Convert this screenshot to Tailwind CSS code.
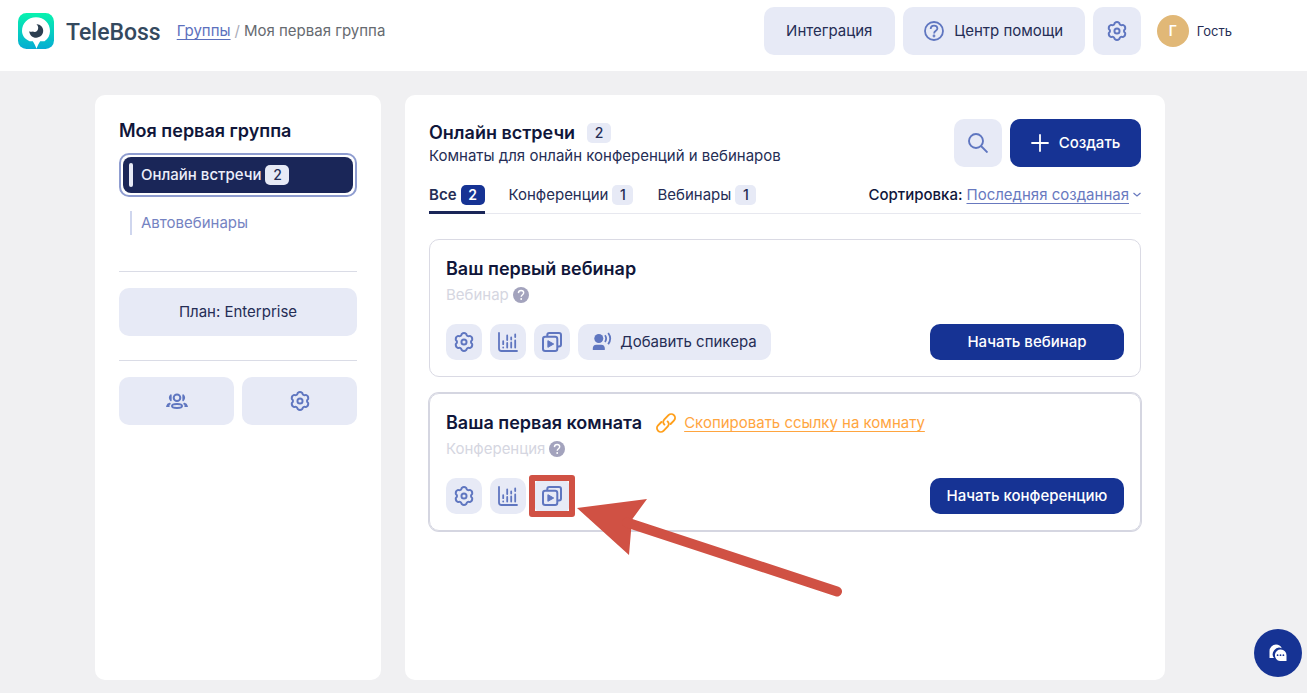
<!DOCTYPE html>
<html lang="ru">
<head>
<meta charset="utf-8">
<meta name="viewport" content="width=device-width, initial-scale=1">
<title>TeleBoss</title>
<script src="https://cdn.jsdelivr.net/npm/@tailwindcss/browser@4"></script>
</head>
<body class="flex min-h-screen flex-col bg-[#f0f0f2] font-['Inter','Liberation_Sans',sans-serif] text-[15px] leading-5 text-[#252d55]">

<svg class="hidden" aria-hidden="true">
  <symbol id="gear" viewBox="0 0 24 24" fill="none" stroke="currentColor" stroke-width="2.100" stroke-linejoin="round">
    <path d="M9.500 3.200Q12 1 14.500 3.200 15.200 6.500 18.400 5.400 21.500 6.500 20.900 9.800 18.300 12 20.900 14.200 21.500 17.500 18.400 18.600 15.200 17.500 14.500 20.800 12 23 9.500 20.800 8.800 17.500 5.600 18.600 2.500 17.500 3.100 14.200 5.700 12 3.100 9.800 2.500 6.500 5.600 5.400 8.800 6.500 9.500 3.200z"/>
    <circle cx="12" cy="12" r="2.800"/>
  </symbol>
  <symbol id="chart" viewBox="0 0 20 20" fill="none" stroke="currentColor" stroke-width="1.800" stroke-linecap="round">
    <path d="M1 .900v15.600q0 2.500 2.500 2.500H19"/>
    <path d="M5.200 9.200v3M5.200 15.300v.2M9.200 3.500v4.500M9.200 11v4.500M13.200 5.500v2M13.200 10.500v5M17.200 2.500v2.500M17.200 8.500v7"/>
  </symbol>
  <symbol id="records" viewBox="0 0 20 20" fill="none" stroke="currentColor" stroke-width="2" stroke-linejoin="round">
    <path d="M5.300 4.400V3q0-2 2-2H17q2 0 2 2v9.600q0 2-2 2h-1.200"/>
    <rect x="1" y="4.700" width="14.300" height="14.300" rx="2.200"/>
    <path d="M5.900 8.700v6.600l5.800-3.300z" fill="currentColor" stroke-width="1"/>
  </symbol>
  <symbol id="help-solid" viewBox="0 0 16 16">
    <circle cx="8" cy="8" r="8" fill="currentColor"/>
    <path d="M5.400 6.100c.1-1.700 1.200-2.600 2.700-2.600s2.600.9 2.600 2.300c0 1.900-2.500 1.900-2.500 4" fill="none" stroke="#fff" stroke-width="1.400"/>
    <circle cx="8.200" cy="12" r=".95" fill="#fff"/>
  </symbol>
</svg>

<header class="flex h-[71px] shrink-0 items-start bg-white pt-[7px] pr-[77px] pl-[18px]">
  <div class="flex h-12 items-center">
    <svg class="size-9" viewBox="0 0 36 36" aria-hidden="true">
      <defs><linearGradient id="lg" x1="0" y1="0" x2="0" y2="1"><stop stop-color="#08f3ae"/><stop offset="1" stop-color="#06acd3"/></linearGradient></defs>
      <rect width="36" height="36" rx="8.500" fill="url(#lg)"/>
      <path d="M18 4.300c8 0 14 6.100 14 13.700 0 4.300-2 8-5.500 10.300h-4.300c-1.500 2.200-2.700 4.600-3.700 7.500-1-2.900-2.200-5.300-3.700-7.500h-3.200C6.700 26 4 22.300 4 18 4 10.400 10 4.300 18 4.300z" fill="#fff"/>
      <path d="M18.500 11.200c3.900-.2 6.700 2.900 6.700 6.600 0 3.900-3.100 6.900-7 6.900-3.800 0-6.700-2.700-7-6.500 1.200.8 2.500.7 3.600.3 1.500.8 3.300.5 4.400-.8 1.500-1.700 1.400-4.900-.7-6.500z" fill="#2c3e50"/>
    </svg>
    <span class="ml-3 pt-1 font-['Roboto'] text-[23px] leading-8 font-medium text-[#34495e]">TeleBoss</span>
    <nav class="ml-4 flex items-center gap-1 text-[#666a70]" aria-label="Навигация">
      <a href="#" class="text-[#5c70bd] underline underline-offset-3">Группы</a><span class="text-[#a9abb8]">/</span><span>Моя первая группа</span>
    </nav>
  </div>
  <div class="ml-auto flex items-center gap-2">
    <button class="h-12 w-[131px] rounded-[10px] bg-[#e7eaf6]">Интеграция</button>
    <button class="flex h-12 w-[182px] items-center justify-center gap-2.5 rounded-[10px] bg-[#e7eaf6]">
      <svg class="size-5 text-[#5f76c0]" viewBox="0 0 20 20" fill="none" stroke="currentColor" stroke-width="1.800" aria-hidden="true"><circle cx="10" cy="10" r="9"/><path d="M6.700 8c0-2.100 1.400-3.400 3.400-3.400s3.300 1.200 3.300 2.900c0 2.400-3.300 2.300-3.300 5"/><circle cx="10" cy="15" r=".5"/></svg>
      Центр помощи
    </button>
    <button class="flex size-12 items-center justify-center rounded-[10px] bg-[#e7eaf6] text-[#5f76c0]" aria-label="Настройки"><svg class="size-[22px]"><use href="#gear"/></svg></button>
    <div class="ml-2 flex items-center gap-2 text-[13px]">
      <span class="flex size-8 items-center justify-center rounded-full bg-[#e1b877] text-[14px] font-semibold text-white">Г</span>
      <span class="-mr-0.5">Гость</span>
    </div>
  </div>
</header>

<div class="flex flex-1 gap-6 pt-6 pr-[142px] pb-[13px] pl-[95px]">
  <aside class="w-[286px] shrink-0 rounded-[10px] bg-white p-6">
    <h2 class="text-[18px] leading-6 font-semibold text-[#10163a]">Моя первая группа</h2>
    <nav class="mt-2.5" aria-label="Разделы">
      <a href="#" class="block rounded-[10px] border-2 border-[#8f9dd0] p-0.5">
        <span class="flex h-9 items-center rounded-lg bg-[#1a2658] px-1.5 font-medium text-[#eceefa]">
          <span class="mr-2 h-6 w-1 rounded-xs bg-[#e7eaf6]"></span>Онлайн встречи<span class="ml-1 flex h-5 w-6 items-center justify-center rounded-[5px] bg-[#e7eaf6] text-[14px] text-[#252d55]">2</span>
        </span>
      </a>
      <a href="#" class="mt-3.5 flex h-6 items-center pl-[11px] text-[#7583c2]"><span class="mr-[9px] h-6 w-0.5 bg-[#cfd6ee]"></span>Автовебинары</a>
    </nav>
    <hr class="mt-9 border-[#dadce6]">
    <button class="mt-4 h-12 w-full rounded-[10px] bg-[#e7eaf6]">План: Enterprise</button>
    <hr class="mt-6 border-[#dadce6]">
    <div class="mt-4 grid grid-cols-2 gap-2 text-[#5f76c0]">
      <button class="flex h-12 items-center justify-center rounded-[10px] bg-[#e7eaf6]" aria-label="Участники">
        <svg class="h-4 w-[22px]" viewBox="0 0 22 16" fill="none" stroke="currentColor" stroke-width="2" stroke-linecap="round"><circle cx="11" cy="4.800" r="3.300"/><ellipse cx="11" cy="13" rx="5" ry="1.900"/><path d="M4.900 2q-2.500 2.700 0 5.400zM17.100 2q2.500 2.700 0 5.400z" fill="currentColor" stroke-width="1.500" stroke-linejoin="round"/><path d="M3.700 10.700q-2 .5-2.400 2.200h1.500M18.300 10.700q2 .5 2.400 2.200h-1.500"/></svg>
      </button>
      <button class="flex h-12 items-center justify-center rounded-[10px] bg-[#e7eaf6]" aria-label="Настройки группы"><svg class="size-[22px]"><use href="#gear"/></svg></button>
    </div>
  </aside>

  <main class="min-w-0 flex-1 rounded-[10px] bg-white p-6">
    <div class="flex items-start">
      <div class="pt-px">
        <h1 class="flex items-center gap-3 text-[18px] leading-[26px] font-semibold text-[#10163a]">Онлайн встречи <span class="flex h-5 w-6 items-center justify-center rounded-[5px] bg-[#e7eaf6] text-[14px] font-medium text-[#252d55]">2</span></h1>
        <p>Комнаты для онлайн конференций и вебинаров</p>
      </div>
      <div class="ml-auto flex gap-2">
        <button class="flex size-12 items-center justify-center rounded-[10px] bg-[#e7eaf6] text-[#5f76c0]" aria-label="Поиск"><svg class="size-5" viewBox="0 0 20 20" fill="none" stroke="currentColor" stroke-width="1.900"><circle cx="8" cy="8" r="7"/><path d="M13 13l6.500 6.500"/></svg></button>
        <button class="flex h-12 w-[131px] items-center justify-center gap-2.5 rounded-[10px] bg-[#163394] font-medium text-white"><svg class="size-[18px]" viewBox="0 0 18 18" stroke="currentColor" stroke-width="1.800" stroke-linecap="round" aria-hidden="true"><path d="M9 1v16M1 9h16"/></svg>Создать</button>
      </div>
    </div>

    <div class="mt-4 flex items-start border-b border-[#e7e8ef]">
      <div class="-mb-px flex gap-6" role="tablist">
        <button role="tab" aria-selected="true" class="flex h-[31px] items-start border-b-3 border-[#1a2658] font-semibold"><span class="flex h-6 items-center gap-1">Все <span class="flex h-5 w-6 items-center justify-center rounded-[5px] bg-[#163394] text-[14px] text-white">2</span></span></button>
        <button role="tab" aria-selected="false" class="flex h-6 items-center gap-1">Конференции <span class="flex h-5 w-[21px] items-center justify-center rounded-[5px] bg-[#e7eaf6] text-[14px] font-medium">1</span></button>
        <button role="tab" aria-selected="false" class="flex h-6 items-center gap-1">Вебинары <span class="flex h-5 w-[21px] items-center justify-center rounded-[5px] bg-[#e7eaf6] text-[14px] font-medium">1</span></button>
      </div>
      <div class="ml-auto flex h-6 items-center gap-1 font-medium text-[#10163a]">
        <span>Сортировка:</span>
        <button class="flex items-center gap-1 font-normal text-[#6879bf]"><span class="underline underline-offset-3">Последняя созданная</span><svg class="h-1.5 w-2" viewBox="0 0 8 6" fill="none" stroke="currentColor" stroke-width="1.200" aria-hidden="true"><path d="M.5 1l3.500 3 3.500-3"/></svg></button>
      </div>
    </div>

    <section class="mt-[25px] rounded-[10px] border border-[#dadae4] p-4">
      <h3 class="text-[18px] leading-[26px] font-semibold text-[#10163a]">Ваш первый вебинар</h3>
      <div class="flex h-[26px] items-center gap-1 text-[#d5d6e1]">Вебинар <svg class="size-4 text-[#a3a3bd]"><use href="#help-solid"/></svg></div>
      <div class="mt-4 flex items-center gap-2 text-[#5f76c0]">
        <button class="flex size-9 items-center justify-center rounded-[10px] bg-[#e7eaf6]" aria-label="Настройки"><svg class="size-[22px]"><use href="#gear"/></svg></button>
        <button class="flex size-9 items-center justify-center rounded-[10px] bg-[#e7eaf6]" aria-label="Статистика"><svg class="size-5"><use href="#chart"/></svg></button>
        <button class="flex size-9 items-center justify-center rounded-[10px] bg-[#e7eaf6]" aria-label="Записи"><svg class="size-5"><use href="#records"/></svg></button>
        <button class="flex h-9 w-[193px] items-center justify-center gap-2 rounded-[10px] bg-[#e7eaf6]">
          <svg class="size-5" viewBox="0 0 20 20" aria-hidden="true"><circle cx="6.800" cy="6.500" r="4.500" fill="currentColor"/><path d="M.8 18v-1.500q0-3.800 3.500-3.800h5q3.500 0 3.500 3.800V18z" fill="currentColor"/><path d="M13 3.300q2.300 3.200 0 6.700M16.200 1q4 5.500 0 11.300" fill="none" stroke="currentColor" stroke-width="1.800"/></svg>
          <span class="text-[#252d55]">Добавить спикера</span>
        </button>
        <button class="ml-auto h-9 w-[194px] rounded-[10px] bg-[#163394] font-medium text-white">Начать вебинар</button>
      </div>
    </section>

    <section class="mt-4 rounded-[10px] border border-[#d5d6e1] p-4 ring ring-[#d5d6e1]">
      <div class="flex items-center">
        <h3 class="text-[18px] leading-[26px] font-semibold text-[#10163a]">Ваша первая комната</h3>
        <svg class="ml-3.5 size-5" viewBox="0 0 20 20" fill="none" stroke="#ff9f1a" stroke-width="1.900" stroke-linecap="round" aria-hidden="true"><path d="M8.400 11.600a3.800 3.800 0 0 1 0-5.300L12.500 2.200a3.800 3.800 0 0 1 5.400 5.400L14.600 11M11.600 8.400a3.800 3.800 0 0 1 0 5.300L7.500 17.800a3.800 3.800 0 0 1-5.400-5.400L5.400 9"/></svg>
        <a href="#" class="ml-2 text-[#ffa53f] underline underline-offset-3">Скопировать ссылку на комнату</a>
      </div>
      <div class="flex h-[26px] items-center gap-1 text-[#d5d6e1]">Конференция <svg class="size-4 text-[#a3a3bd]"><use href="#help-solid"/></svg></div>
      <div class="mt-4 flex items-center gap-2 text-[#5f76c0]">
        <button class="flex size-9 items-center justify-center rounded-[10px] bg-[#e7eaf6]" aria-label="Настройки"><svg class="size-[22px]"><use href="#gear"/></svg></button>
        <button class="flex size-9 items-center justify-center rounded-[10px] bg-[#e7eaf6]" aria-label="Статистика"><svg class="size-5"><use href="#chart"/></svg></button>
        <div class="relative">
          <button class="flex size-9 items-center justify-center rounded-[10px] bg-[#e7eaf6]" aria-label="Записи"><svg class="size-5"><use href="#records"/></svg></button>
          <div class="pointer-events-none absolute -top-[3px] -left-[5px] h-[42px] w-[46px] rounded-[3px] border-6 border-[#d05144]"></div>
          <svg class="pointer-events-none absolute top-[21px] left-[43px] h-[100px] w-[270px]" viewBox="0 0 270 100" aria-hidden="true"><path d="M0 9L70 0 55 20.500 52 56z" fill="#d05144"/><path d="M50 23.500L260 92.500" stroke="#d05144" stroke-width="10" stroke-linecap="round"/></svg>
        </div>
        <button class="ml-auto h-9 w-[194px] rounded-[10px] bg-[#163394] font-medium text-white">Начать конференцию</button>
      </div>
    </section>
  </main>
</div>

<button class="fixed right-[5px] bottom-4 flex size-12 items-center justify-center rounded-full bg-[#163394] text-white" aria-label="Чат">
  <svg class="size-[18px]" viewBox="0 0 18 18" aria-hidden="true"><path d="M.5 14V7A6.500 6.500 0 0 1 7 .5a6.500 6.500 0 0 1 5.800 3.700A6.500 6.500 0 0 0 5 14z" fill="currentColor"/><path d="M17.500 17H11a5.800 5.800 0 1 1 6.500-5.800z" fill="currentColor"/><g fill="#163394"><circle cx="8.600" cy="11.200" r=".9"/><circle cx="11.500" cy="11.200" r=".9"/><circle cx="14.400" cy="11.200" r=".9"/></g></svg>
</button>
</body>
</html>
